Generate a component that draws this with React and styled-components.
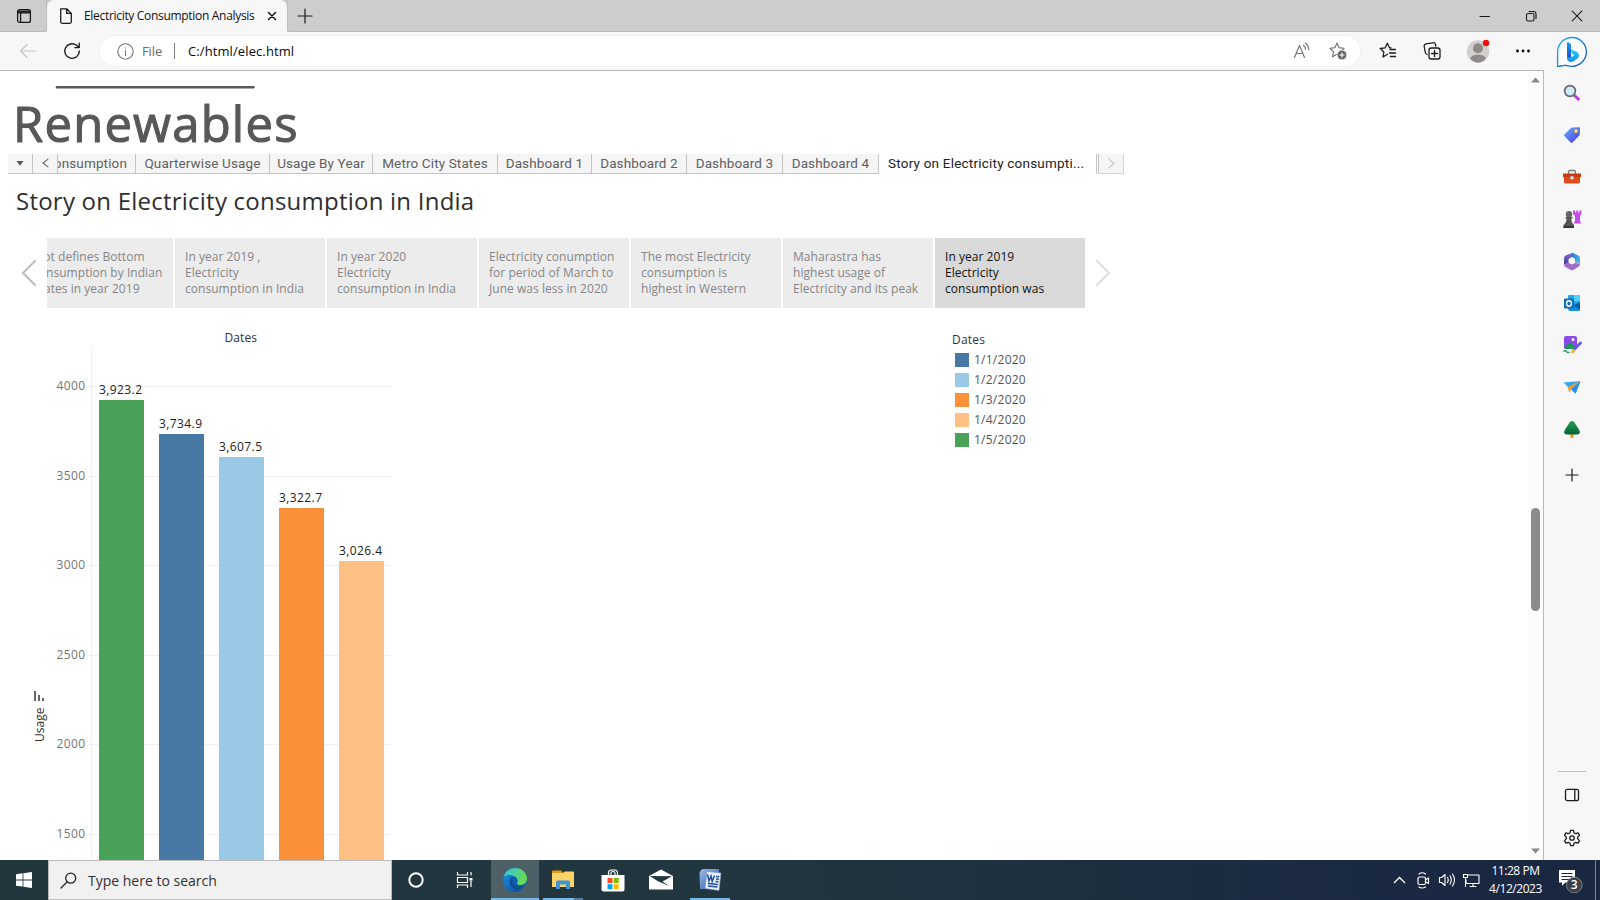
import React from "react";
import styled, { createGlobalStyle } from "styled-components";

const GlobalStyle = createGlobalStyle`
  * { box-sizing: border-box; }
  html, body { margin: 0; padding: 0; }
  body { width: 1600px; height: 900px; overflow: hidden; background: #fff; font-family: "Open Sans", "Noto Sans", sans-serif; }
  svg { display: block; flex: none; }
`;

/* ---------- window frame ---------- */

const Desktop = styled.div`
  width: 1600px;
  height: 900px;
  display: flex;
  flex-direction: column;
  overflow: hidden;
`;

const TitleBar = styled.div`
  height: 32px;
  display: flex;
  background: #cdcdcd;
  flex: none;
`;

const Slot = styled.div`
  width: ${(p) => p.$w}px;
  display: flex;
  align-items: center;
  justify-content: center;
  flex: none;
`;

const WorkspaceSlot = styled(Slot)`
  padding-left: 2px;
  border-bottom: 1px solid #b9b9b9;
  border-right: 1px solid #bdbdbd;
  border-bottom-right-radius: 4px;
`;

const BrowserTab = styled.div`
  width: 240px;
  display: flex;
  align-items: center;
  background: #f7f7f7;
  border-radius: 7px 7px 0 0;
  padding-left: 11px;
`;

const TabTitle = styled.span`
  font-size: 12px;
  letter-spacing: -0.31px;
  color: #111;
  white-space: nowrap;
  width: 171px;
  margin: 0 12px 1px 10px;
`;

const TitleRest = styled.div`
  flex: 1;
  display: flex;
  justify-content: space-between;
  border-bottom: 1px solid #b9b9b9;
  border-left: 1px solid #bdbdbd;
  border-bottom-left-radius: 4px;
`;

const WindowControls = styled.div`
  display: flex;
`;

const Browser = styled.div`
  height: 828px;
  display: flex;
  flex: none;
  background: #f7f7f7;
`;

const MainColumn = styled.div`
  width: 1544px;
  display: flex;
  flex-direction: column;
`;

const Toolbar = styled.div`
  height: 38px;
  display: flex;
  align-items: center;
  flex: none;
`;

const AddressBar = styled.div`
  width: 1260px;
  height: 30px;
  margin: 0 6px 0 12px;
  flex: none;
  border-radius: 15px;
  background: #fff;
  display: flex;
  align-items: center;
  padding-left: 17px;
  font-size: 13px;
  box-shadow: 0 0 3px rgba(0, 0, 0, 0.06);
`;

const Scheme = styled.span`
  color: #6b6b6b;
  margin: 0 11px 0 8px;
  letter-spacing: -0.1px;
  width: 21px;
`;

const SchemeDivider = styled.span`
  width: 1px;
  height: 16px;
  background: #7d7d7d;
`;

const Url = styled.span`
  color: #0a0a0a;
  margin-left: 13px;
  flex: 1;
  letter-spacing: 0.1px;
`;

const Viewport = styled.div`
  height: 790px;
  border-top: 1px solid #b8b8b8;
  border-right: 1px solid #b8b8b8;
  background: #fff;
  display: flex;
  overflow: hidden;
`;

const Page = styled.div`
  flex: 1;
  height: 789px;
  overflow: hidden;
  display: flex;
  flex-direction: column;
`;

const ScrollTrack = styled.div`
  width: 15px;
  background: #fcfcfc;
  display: flex;
  flex-direction: column;
  align-items: center;
  padding: 6px 0 6px;
`;

const ScrollThumb = styled.div`
  width: 9px;
  height: 103px;
  border-radius: 5px;
  background: #8b8b8b;
  margin: 425px 0 auto;
`;

/* ---------- sheet tabs ---------- */

const SheetStrip = styled.div`
  height: 20px;
  display: flex;
  margin-left: 8px;
  flex: none;
  font-family: Roboto, "Open Sans", sans-serif;
`;

const SheetCell = styled.div`
  width: ${(p) => p.$w}px;
  height: 20px;
  display: flex;
  align-items: center;
  justify-content: ${(p) => (p.$end ? "flex-end" : "center")};
  padding-right: ${(p) => (p.$end ? 8 : 0)}px;
  padding-bottom: 1px;
  overflow: hidden;
  white-space: nowrap;
  font-size: 13.5px;
  letter-spacing: 0.13px;
  color: #5f5f5f;
  background: #f5f5f5;
  border-right: 1px solid #c4c4c4;
  border-bottom: 1px solid #c4c4c4;
`;

const ActiveSheet = styled(SheetCell)`
  justify-content: flex-start;
  padding-left: 9px;
  letter-spacing: 0.21px;
  color: #222;
  background: #fff;
  border-bottom-color: #fff;
`;

const SheetNext = styled(SheetCell)`
  margin-left: 1px;
  border-color: #d4d4d4;
  border-left: 1px solid #c4c4c4;
`;

const StoryTitle = styled.h1`
  margin: 0;
  height: 64px;
  padding: 9px 0 0 16px;
  font-size: 24px;
  line-height: 36px;
  font-weight: 400;
  letter-spacing: 0.23px;
  color: #2f2f2f;
  flex: none;
`;

/* ---------- story points ---------- */

const StoryRow = styled.div`
  height: 70px;
  display: flex;
  align-items: center;
  padding-left: 11px;
  flex: none;
`;

const Cards = styled.div`
  width: 1038px;
  display: flex;
  justify-content: flex-end;
  gap: 2px;
  overflow: hidden;
`;

const Card = styled.div`
  width: 150px;
  height: 70px;
  flex: none;
  padding: 11px 0 0 10px;
  font-size: 12px;
  line-height: 16px;
  letter-spacing: 0.04px;
  white-space: pre;
  background: ${(p) => (p.$active ? "#d9d9d9" : "#ececec")};
  color: ${(p) => (p.$active ? "#111" : "#868686")};
`;

const VizRow = styled.div`
  flex: 1;
  display: flex;
  align-items: flex-start;
`;

const Legend = styled.div`
  margin: 22px 0 0 552px;
  display: flex;
  flex-direction: column;
  font-size: 12px;
  color: #333;
`;

const LegendTitle = styled.div`
  height: 19px;
  line-height: 20px;
  letter-spacing: 0.2px;
`;

const LegendItem = styled.div`
  height: 20px;
  display: flex;
  align-items: center;
  gap: 5px;
  padding-left: 3px;
  letter-spacing: 0.25px;
  color: #555;
`;

const Swatch = styled.span`
  width: 14px;
  height: 14px;
  margin-top: 1px;
  background: ${(p) => p.$c};
`;

/* ---------- side bar ---------- */

const SideBar = styled.div`
  width: 56px;
  display: flex;
  flex-direction: column;
  align-items: center;
`;

const SideSlot = styled.div`
  height: ${(p) => p.$h || 42}px;
  display: flex;
  align-items: center;
  justify-content: center;
  flex: none;
`;

const SideDivider = styled.div`
  width: 28px;
  height: 1px;
  background: #bdbdbd;
  margin-top: auto;
  margin-bottom: 2px;
`;

/* ---------- task bar ---------- */

const TaskBar = styled.div`
  height: 40px;
  display: flex;
  background: linear-gradient(90deg, #22363d 0%, #21363f 48%, #1d2e3f 70%, #1a2843 88%, #1a2740 100%);
  flex: none;
`;

const SearchBox = styled.div`
  width: 344px;
  height: 40px;
  background: #f1f1f1;
  border: 1px solid #bcbcbc;
  display: flex;
  align-items: center;
  padding: 1px 0 0 11px;
  gap: 11px;
  font-size: 14px;
  color: #303030;
`;

const TaskButton = styled.div`
  width: 48px;
  height: 40px;
  margin-right: ${(p) => p.$gap || 0}px;
  display: flex;
  flex-direction: column;
  align-items: center;
  justify-content: space-between;
  padding-top: ${(p) => p.$top || 8}px;
  background: ${(p) => (p.$active ? "#4d6066" : "transparent")};
`;

const Running = styled.div`
  width: ${(p) => p.$w}px;
  height: 2px;
  background: ${(p) => (p.$split ? "linear-gradient(90deg, #76b9ed 31px, #4f7ea3 31px)" : "#76b9ed")};
`;

const Tray = styled.div`
  margin-left: auto;
  display: flex;
  align-items: center;
`;

const Clock = styled.div`
  width: 63px;
  padding-left: 2px;
  color: #fff;
  font-size: 12px;
  line-height: 18px;
  text-align: center;
  letter-spacing: -0.45px;
`;

const Peek = styled.div`
  width: 5px;
  height: 40px;
  border-left: 1px solid #7c8698;
`;

/* ---------- icons ---------- */

const Line = ({ s = 16, w = 1, c = "#1b1b1b", children, ...rest }) => (
  <svg width={s} height={s} viewBox={`0 0 ${s} ${s}`} fill="none" stroke={c} strokeWidth={w} strokeLinecap="round" strokeLinejoin="round" {...rest}>
    {children}
  </svg>
);

const WorkspacesIcon = () => (
  <Line w="1.3"><rect x="1.6" y="1.6" width="12.8" height="12.8" rx="2" /><path d="M2 3.2h12v1.6H2z" fill="#1b1b1b" stroke="#1b1b1b" /><path d="M4.6 5v9" /></Line>
);
const FileIcon = () => (
  <Line w="1.3"><path d="M2.7.8h6L13.3 5.400v8.400a1.500 1.500 0 0 1-1.500 1.500H4.200a1.500 1.500 0 0 1-1.500-1.500zM8.700.8v4.600h4.600" /></Line>
);
const CloseTabIcon = () => <Line s={10} w="1.5"><path d="M1.5 1.500l7 7M8.500 1.500l-7 7" /></Line>;
const PlusIcon = ({ s = 16 }) => <Line s={s} w="1.2"><path d={`M${s / 2} 1v${s - 2}M1 ${s / 2}h${s - 2}`} /></Line>;
const MinIcon = () => <Line s={12}><path d="M1 6.500h9.500" /></Line>;
const RestoreIcon = () => <Line s={12} w="1.1"><rect x="1.500" y="3.500" width="7.500" height="7.500" rx="1.500" /><path d="M4 1.500h4.500A2.600 2.600 0 0 1 11 4v4.500" /></Line>;
const CloseIcon = () => <Line s={12} w="1.1"><path d="M1.200 1.200l9.600 9.600M10.800 1.200L1.200 10.800" /></Line>;
const BackIcon = () => <Line s={18} c="#c6c6c6" w="1.2"><path d="M17 9H1.500M8 2.500L1.500 9 8 15.500" /></Line>;
const RefreshIcon = () => <Line s={18} w="1.400"><path d="M16.300 9A7.300 7.300 0 1 1 13.500 3.300L16 5.500M16.200 1.200V5.600H11.800" /></Line>;
const InfoIcon = () => <Line s={17} c="#777" w="1.1"><circle cx="8.500" cy="8.500" r="7.700" /><path d="M8.500 7.500v5M8.500 4.800v.3" /></Line>;
const ReadAloudIcon = () => (
  <Line s={18} c="#777" w="1.2"><path d="M1.500 15.500L6.500 3.500l5 12M3 11.500h7M10.500 3.200q2 1.500 2 4M12.500 1.200q3.200 2.300 3.200 6.500" /></Line>
);
const star = "M8 1l2.100 4.700 5 .6-3.700 3.500 1 5L8 12.300l-4.500 2.500 1-5L.900 6.300l5-.6z";
const AddStarIcon = () => (
  <Line s={18} c="#777" w="1.2"><path d={star} /><circle cx="13" cy="13" r="4.800" fill="#666" stroke="#fff" strokeWidth=".6" /><path d="M13 11v4M11 13h4" stroke="#fff" /></Line>
);
const FavoritesIcon = () => (
  <Line s={18} w="1.3"><path d="M8.500 12.200L4 15l.9-5L1.200 6.500l5-.7L8.300 1.300l2.200 4.500h1.500M11 7.500h5.500M10.500 11h6M11.500 14.500h5" /></Line>
);
const CollectionsIcon = () => (
  <Line s={18} w="1.3"><rect x="6" y="6" width="11" height="11" rx="2.200" /><path d="M11.500 8.500v6M8.500 11.500h6M4 12.500A3 3 0 0 1 2.200 10L1.200 4.500A2.300 2.300 0 0 1 3 1.900l6.500-1.100A2.500 2.500 0 0 1 12.500 2.500L12.800 4" /></Line>
);
const ProfileIcon = () => (
  <svg width="26" height="26" viewBox="0 0 26 26">
    <circle cx="13" cy="13.500" r="11.200" fill="#d2d0ce" />
    <circle cx="13" cy="10.300" r="5" fill="#8d8a87" />
    <path d="M5.300 20.600C6.200 17.500 9 16.800 13 16.800s6.800.7 7.700 3.800A11 11 0 0 1 13 24.700a11 11 0 0 1-7.700-4.100z" fill="#8d8a87" />
    <circle cx="21" cy="5" r="3.200" fill="#f00f0f" />
  </svg>
);
const DotsIcon = () => <svg width="16" height="4"><circle cx="2.500" cy="2" r="1.400" /><circle cx="8" cy="2" r="1.400" /><circle cx="13.500" cy="2" r="1.400" /></svg>;
const Arrow = ({ down }) => <svg width="9" height="6" viewBox="0 0 9 6"><path d={down ? "M0 .5h9L4.500 5.500z" : "M0 5.500h9L4.500.5z"} fill="#8a8a8a" /></svg>;
const Chevron = ({ w, h, c, sw, right }) => (
  <svg width={w} height={h} viewBox={`0 0 ${w} ${h}`} fill="none" stroke={c} strokeWidth={sw} strokeLinecap="round">
    <path d={right ? `M${sw} ${sw}L${w - sw} ${h / 2}L${sw} ${h - sw}` : `M${w - sw} ${sw}L${sw} ${h / 2}L${w - sw} ${h - sw}`} />
  </svg>
);

const Gradient = ({ id, from, to, x2 = 1, y2 = 1 }) => (
  <linearGradient id={id} x1="0" y1="0" x2={x2} y2={y2}><stop stopColor={from} /><stop offset="1" stopColor={to} /></linearGradient>
);
const BingIcon = () => (
  <svg width="32" height="32" viewBox="0 0 32 32">
    <defs><Gradient id="bingRing" from="#12b9f0" to="#1c4fc4" /><Gradient id="bingB" from="#1c9cf4" to="#1747d0" x2={0} /><Gradient id="bingC" from="#1fd0f0" to="#1f8ff0" x2={0} /></defs>
    <path d="M1.600 30.300V16A14.400 14.400 0 1 1 16 30.300c-4 0-5.500-1.300-7.500-1-2.500.3-4 1-6.900 1z" fill="#fff" stroke="url(#bingRing)" strokeWidth="1.300" />
    <path d="M11 7q0-1.500 1.300-.8l2 1.200q.8.600.8 1.600v12.500L11 23.500z" fill="url(#bingB)" />
    <path d="M11 19.500c.5 2.500 3 2.500 4.500 1.600l3-1.900-1.500-.8q-.8-.4-1.100-1.300l-.9-2.600q-.3-1.300 1-.8l5 2.300c2.500 1.500 2.500 4.600.8 6.200l-4.600 3.200C14.500 27 11 25.500 11 22.500z" fill="url(#bingC)" />
  </svg>
);
const SearchColorIcon = () => (
  <svg width="18" height="18" viewBox="0 0 18 18"><path d="M11 11l5.200 5" stroke="#c92cf0" strokeWidth="3" /><path d="M10.500 10.500l2.200 2.200" stroke="#777" strokeWidth="2" /><circle cx="7" cy="7" r="5.400" fill="#cdeafa" stroke="#666" strokeWidth="1.600" /></svg>
);
const TagIcon = () => (
  <svg width="18" height="18" viewBox="0 0 18 18"><defs><Gradient id="tag" from="#64b2fa" to="#4b35e8" /></defs><path d="M9.500 1.500L16 1.200q1 0 1 1l-.3 6.200q0 .8-.6 1.400L9.600 16.500q-1 .9-2 0L1.500 10.300q-.9-1 0-2l6.500-6.200q.7-.6 1.500-.6z" fill="url(#tag)" /><circle cx="13" cy="5" r="1.800" fill="#fbe9a0" stroke="#e0a21a" strokeWidth=".8" /></svg>
);
const ToolboxIcon = () => (
  <svg width="18" height="16" viewBox="0 0 18 16"><path d="M5.500 5V3q0-1.500 1.500-1.500h4q1.500 0 1.500 1.500v2" fill="none" stroke="#777" strokeWidth="1.300" /><path d="M1 7h16v6q0 1.500-1.500 1.500h-13Q1 14.500 1 13z" fill="#e04c1c" /><path d="M0 4.500h18v3.700H0z" fill="#c93a10" /><circle cx="9" cy="8.800" r="1.900" fill="#ddd" stroke="#999" strokeWidth=".5" /></svg>
);
const GamesIcon = () => (
  <svg width="20" height="19" viewBox="0 0 20 19"><path d="M11 .5h2v2h1.200v-2h2v2h1.200v-2h2v3.500L18 6v5l1.300 2.500h-7.600L13 11V6l-2-2z" fill="#c24df0" /><circle cx="7" cy="4.200" r="3.200" fill="#666" /><path d="M3.500 7h7v1.500H9.300c0 3 1 5 2.700 6.500v3H1.500v-3C3.500 13.500 4.500 11.500 4.600 8.500H3.500z" fill="#555" /><path d="M1.500 16.200h10.500V18H1.500z" fill="#333" /></svg>
);
const OfficeIcon = () => (
  <svg width="18" height="19" viewBox="0 0 18 19"><defs><Gradient id="off1" from="#8e6bd8" to="#3d3a9c" x2={0} /><Gradient id="off2" from="#2a6fd0" to="#55c5ee" /></defs>
    <path d="M9.500.7L3 3.200Q1 4.200 1 6.500v6.300l4.500-2.300V7L12 3z" fill="url(#off1)" />
    <path d="M9.500.7l6 3Q17 4.500 17 6.500v6L12 9.500V7L7.500 4z" fill="url(#off2)" />
    <path d="M17 12.500q-.2 1.500-1.500 2.200L10.700 17.800q-1.700 1-3.400 0L2.300 15Q1 14.200 1 12.500l4.500-2.300L9 12.500l3.500-2.300z" fill="#a06cc8" /><circle cx="9" cy="9.200" r="3" fill="#f7f7f7" />
  </svg>
);
const OutlookIcon = () => (
  <svg width="18" height="18" viewBox="0 0 18 18"><rect x="5" y="1" width="12" height="15" rx="1" fill="#28a8ea" /><path d="M11 1h6v6h-6z" fill="#50d2fa" /><path d="M5 10l12-1v6.500q0 1.500-1.500 1.500H6z" fill="#1490df" /><path d="M11 11.500L17 8v8z" fill="#0a5ca8" /><rect x="1" y="4.500" width="10" height="10" rx="1" fill="#0f6cbd" /><ellipse cx="6" cy="9.500" rx="2.400" ry="2.700" fill="none" stroke="#fff" strokeWidth="1.400" /></svg>
);
const DesignerIcon = () => (
  <svg width="20" height="20" viewBox="0 0 20 20"><rect x="2" y="1" width="13" height="13" rx="2" fill="#8d49e8" /><circle cx="11" cy="4.500" r="1.500" fill="#fff" /><path d="M2 12.500l5-4.500q1-.7 2 0l5 4.500-2 1.500H3z" fill="#159a5b" /><path d="M1.500 16.500q2-1.800 3 0t3 .5" fill="none" stroke="#159a5b" strokeWidth="1.400" /><path d="M18.500 8L12 14.500" stroke="#6258e8" strokeWidth="2.800" strokeLinecap="round" /><path d="M11 13.500l2 2c0 2.500-2 3-4.500 2.700 1.200-.8.500-3.800 2.500-4.700z" fill="#f5b53c" /></svg>
);
const PlaneIcon = () => (
  <svg width="18" height="16" viewBox="0 0 18 16"><path d="M.5 3.500L17.500 2 5.500 8.500z" fill="#30a8ee" /><path d="M17.500 2l-5 12.500-4-4z" fill="#1a70d8" /><path d="M17.500 2L4.500 8l1.800 5.500 2-3.500z" fill="#f09a30" /><path d="M17.500 2L8 10l4.500 4.500z" fill="#2b8fe8" /></svg>
);
const TreeIcon = () => (
  <svg width="18" height="19" viewBox="0 0 18 19"><defs><Gradient id="tree" from="#22a052" to="#046233" x2={0} /></defs><path d="M7.300 13h3.400v4.500q-1.700.8-3.400 0z" fill="#f09a2c" /><path d="M9 1q1.300 0 2.300 1.200l4.900 7.800q1.900 4.500-2.300 4.500H4.100q-4.200 0-2.300-4.500l4.900-7.800Q7.700 1 9 1z" fill="url(#tree)" /></svg>
);
const PanelIcon = () => <Line s={16} w="1.300"><rect x="1.500" y="2.300" width="13" height="11.400" rx="2" /><path d="M10.800 2.500v11" /></Line>;
const GearIcon = () => (
  <Line s={18} w="1.300"><circle cx="9" cy="9" r="2.200" /><path d="M7.600 1.300h2.800l.6 2.400 1.700 1 2.400-.8 1.400 2.500-1.800 1.700v1.800l1.800 1.700-1.400 2.500-2.400-.8-1.700 1-.6 2.400H7.600L7 14.300l-1.700-1-2.400.8-1.400-2.500 1.800-1.700V8.100L1.500 6.400l1.400-2.500 2.400.8 1.700-1z" /></Line>
);

const WindowsIcon = () => <svg width="16" height="16"><path d="M0 2.300L6.600 1.300V7.500H0zM7.400 1.200L16 0v7.500H7.400zM0 8.400h6.600v6.200L0 13.700zM7.400 8.400H16V16l-8.600-1.200z" fill="#fff" /></svg>;
const MagnifierIcon = () => <Line s={17} c="#222" w="1.300"><circle cx="10.700" cy="6.200" r="5" /><path d="M7 10L1 16" /></Line>;
const CortanaIcon = () => <svg width="16" height="24"><circle cx="8" cy="12" r="6.700" fill="none" stroke="#fff" strokeWidth="1.900" /></svg>;
const TaskViewIcon = () => <svg width="17" height="24" viewBox="0 0 17 24" fill="none" stroke="#fff" strokeWidth="1.200"><path d="M1.500 4v3h10V4M1.500 20v-3h10v3M1.500 9.500h10v5h-10zM15 4v3.500M15 12.500V19" /><path d="M13.500 10h3v2.500h-3z" fill="#fff" stroke="none" /></svg>;
const EdgeIcon = () => (
  <svg width="24" height="24" viewBox="0 0 24 24"><defs><Gradient id="edgeA" from="#2fc0ee" to="#67db55" y2={0.3} /><Gradient id="edgeB" from="#1a8ae0" to="#0d4f9e" /></defs>
    <circle cx="12" cy="12" r="12" fill="#0f5bab" />
    <path d="M.3 10C1.500 3.500 6.500 0 12 0c7 0 12 5 12 10.500 0 4.500-3.500 6.500-7 6.500-2.500 0-3.500-1-3-2 1.500-2 .8-5-2.500-6.500C7.500 6.500 2 7 .3 10z" fill="url(#edgeA)" />
    <path d="M.3 10.500C2 6.800 7 6.800 10 8.300c-4 1.700-4.500 6-2.500 9.200 2 3.300 5.500 5 9 4.600C9 26.500-1.500 21 .3 10.500z" fill="url(#edgeB)" />
    <path d="M10 8.600c-3 3-1.500 8 2.500 9.600 3.500 1.300 6.500.5 10-1.500-2.500 5.500-9.500 6.500-13.500 2C6 15.500 6.500 10.500 10 8.600z" fill="#134a8d" />
    <path d="M22.500 16.500c1.500 0-2 4.500-6 5.500 2-1 4-3 6-5.500z" fill="#4d6066" />
  </svg>
);
const FolderIcon = () => (
  <svg width="22" height="20" viewBox="0 0 22 20"><path d="M0 1.500Q0 .5 1 .5h8l2 2.500H0z" fill="#e09b10" /><path d="M0 3h11l1.500-1.500H21q1 0 1 1V17H0z" fill="#fbd467" /><path d="M4 19v-7q0-1.500 1.500-1.500h11Q18 10.500 18 12v7h-4v-4.500H8V19z" fill="#3f93d6" /></svg>
);
const StoreIcon = () => (
  <svg width="24" height="24" viewBox="0 0 24 24"><path d="M7.500 6V4Q7.500 1 10.500 1h3q3 0 3 3v2M10 6V4q0-1.500 2-1.500T14 4v2" fill="none" stroke="#fff" strokeWidth="1.200" /><path d="M.5 6h23v14.500q0 2-2 2h-19q-2 0-2-2z" fill="#fff" /><path d="M6.500 9h5v5h-5z" fill="#f25022" /><path d="M12.700 9h5v5h-5z" fill="#7fba00" /><path d="M6.500 15.200h5v5h-5z" fill="#00a4ef" /><path d="M12.700 15.200h5v5h-5z" fill="#ffb900" /></svg>
);
const MailIcon = () => <svg width="24" height="22" viewBox="0 0 24 22"><path d="M0 8L12 1.500 24 8v13.500H0z" fill="#fff" /><path d="M1 8l22 .3-9.500 5.200L20 18 8.500 13z" fill="#22363f" /></svg>;
const WordIcon = () => (
  <svg width="23" height="24" viewBox="0 0 23 24"><defs><Gradient id="word" from="#9dbce8" to="#2c59a8" /></defs><path d="M4 1h16l-1 20H1L.500 5Q2 1 4 1z" fill="url(#word)" /><path d="M8 3.500L22 5l-2 17.500L6 20.500z" fill="#e9eff9" stroke="#7c98c8" strokeWidth=".6" />
    <path d="M8.500 6.500l1.500 6.500 2-5 1.200 5.500 2.300-6M17 8.500l3.200.3M17 11l3 .3M16.500 13.500l3 .3M9 15.500l10 1M9 18l9.500 1" fill="none" stroke="#2450a0" strokeWidth="1.500" /></svg>
);
const MeetIcon = () => <Line s={18} c="#fff" w="1.200"><rect x="4" y="6" width="7.500" height="7.500" rx="1.500" /><path d="M11.500 8.700l3-1.700v5.500l-3-1.700M5 3q3.200-2.500 6.500 0M5 16q3.200 2 6.500 0" /></Line>;
const SpeakerIcon = () => <Line s={18} c="#fff" w="1.100"><path d="M1.500 6.500h2.200L7 3.500v11l-3.300-3H1.500zM9.500 6.500q1.500 2.500 0 5M12 4.800q2.700 4.200 0 8.400M14.500 3q4 6 0 12" /></Line>;
const NetworkIcon = () => <Line s={18} c="#fff" w="1.100"><path d="M6 4h11v8.500H4V8.500M8 15.500h6M11 12.500v3M1.500 3.500h4v3h-4zM3.500 6.500v9" /></Line>;
const NotificationIcon = () => (
  <svg width="25" height="25" viewBox="0 0 25 25"><path d="M1 2h16v12.500H7.500L4 17.700v-3.200H1z" fill="#fff" /><path d="M3.500 5.500h11M3.500 8.500h11M3.500 11.500h8" stroke="#1b2840" strokeWidth="1.200" /><circle cx="16.300" cy="17" r="7.800" fill="#3c3f45" stroke="#83878e" strokeWidth=".9" /><text x="16.300" y="21.300" textAnchor="middle" fontSize="12" fontWeight="600" fill="#fff">3</text></svg>
);

/* ---------- data ---------- */

const bars = [
  { label: "3,923.2", x: 99, top: 92, c: "#49a257" },
  { label: "3,734.9", x: 159, top: 126, c: "#4878a4" },
  { label: "3,607.5", x: 219, top: 149, c: "#9ac9e7" },
  { label: "3,322.7", x: 279, top: 200, c: "#fb903a" },
  { label: "3,026.4", x: 339, top: 253, c: "#fec085" },
];
const ticks = [
  [4000, 78.5], [3500, 168.5], [3000, 257.5], [2500, 347.5], [2000, 436.5], [1500, 526.5],
];
const legend = [
  ["1/1/2020", "#4878a4"], ["1/2/2020", "#9ac9e7"], ["1/3/2020", "#fb903a"], ["1/4/2020", "#fec085"], ["1/5/2020", "#49a257"],
];
const stories = [
  "Plot defines Bottom\nconsumption by Indian\nStates in year 2019",
  "In year 2019 ,\nElectricity\nconsumption in India",
  "In year 2020\nElectricity\nconsumption in India",
  "Electricity conumption\nfor period of March to\nJune was less in 2020",
  "The most Electricity\nconsumption is\nhighest in Western",
  "Maharastra has\nhighest usage of\nElectricity and its peak",
  "In year 2019\nElectricity\nconsumption was",
];
const sheets = [
  ["Quarterwise Usage", 134], ["Usage By Year", 103], ["Metro City States", 125], ["Dashboard 1", 94],
  ["Dashboard 2", 95], ["Dashboard 3", 96], ["Dashboard 4", 96],
];

const Chart = () => (
  <svg width="400" height="552" viewBox="0 0 400 552" fontSize="12" fontFamily="Open Sans">
    <text x="224.500" y="34" textLength="32.500" fill="#333">Dates</text>
    {ticks.map(([t, y]) => (
      <g key={t}>
        <path d={`M88 ${y}H391`} stroke="#f0f0f0" />
        <text x="56.500" y={y + 3.500} textLength="28.500" fill="#757575">{t}</text>
      </g>
    ))}
    <path d="M91.500 39V552" stroke="#f0f0f0" />
    {bars.map((b) => (
      <g key={b.label}>
        <rect x={b.x} y={b.top} width="45" height={552 - b.top} fill={b.c} />
        <text x={b.x} y={b.top - 6} textLength="43" fill="#222">{b.label}</text>
      </g>
    ))}
    <path d="M34 383h2v10h-2zM38 387h2v6h-2zM42 390h2v3h-2z" fill="#666" />
    <text transform="translate(44 434) rotate(-90)" textLength="34.500" fill="#333">Usage</text>
  </svg>
);

const LogoArt = () => (
  <svg width="320" height="83" viewBox="0 0 320 83">
    <path d="M57 16.300H253.500" stroke="#5a5a5a" strokeWidth="2.400" strokeLinecap="round" />
    <text x="13" y="70.500" fontFamily="Open Sans" fontSize="49" fontWeight="400" textLength="284.500" fill="#58585a" stroke="#58585a" strokeWidth="1.100" strokeLinejoin="round">Renewables</text>
  </svg>
);

export default function App() {
  return (
    <Desktop>
      <GlobalStyle />
      <TitleBar>
        <WorkspaceSlot $w={47}><WorkspacesIcon /></WorkspaceSlot>
        <BrowserTab>
          <FileIcon />
          <TabTitle>Electricity Consumption Analysis</TabTitle>
          <CloseTabIcon />
        </BrowserTab>
        <TitleRest>
          <Slot $w={33}><PlusIcon /></Slot>
          <WindowControls>
            <Slot $w={46}><MinIcon /></Slot>
            <Slot $w={46}><RestoreIcon /></Slot>
            <Slot $w={46}><CloseIcon /></Slot>
          </WindowControls>
        </TitleRest>
      </TitleBar>

      <Browser>
        <MainColumn>
          <Toolbar>
            <Slot $w={56}><BackIcon /></Slot>
            <Slot $w={32}><RefreshIcon /></Slot>
            <AddressBar>
              <InfoIcon />
              <Scheme>File</Scheme>
              <SchemeDivider />
              <Url>C:/html/elec.html</Url>
              <Slot $w={28}><ReadAloudIcon /></Slot>
              <Slot $w={44}><AddStarIcon /></Slot>
            </AddressBar>
            <Slot $w={44}><FavoritesIcon /></Slot>
            <Slot $w={44}><CollectionsIcon /></Slot>
            <Slot $w={48}><ProfileIcon /></Slot>
            <Slot $w={42}><DotsIcon /></Slot>
          </Toolbar>
          <Viewport>
            <Page>
              <LogoArt />
              <SheetStrip>
                <SheetCell $w={25}><svg width="8" height="5"><path d="M.500 0h7L4 4.800z" fill="#555" /></svg></SheetCell>
                <SheetCell $w={25}><Chevron w={7} h={10} c="#666" sw={1.1} /></SheetCell>
                <SheetCell $w={78} $end>Consumption</SheetCell>
                {sheets.map(([name, w]) => <SheetCell key={name} $w={w}>{name}</SheetCell>)}
                <ActiveSheet $w={218}>Story on Electricity consumpti...</ActiveSheet>
                <SheetNext $w={26}><Chevron w={7} h={11} c="#c4c4c4" sw={1.1} right /></SheetNext>
              </SheetStrip>
              <StoryTitle>Story on Electricity consumption in India</StoryTitle>
              <StoryRow>
                <Slot $w={36}><Chevron w={16} h={28} c="#bcbcbc" sw={2} /></Slot>
                <Cards>
                  {stories.map((s, i) => <Card key={i} $active={i === stories.length - 1}>{s}</Card>)}
                </Cards>
                <Slot $w={36}><Chevron w={16} h={28} c="#dedede" sw={2} right /></Slot>
              </StoryRow>
              <VizRow>
                <Chart />
                <Legend>
                  <LegendTitle>Dates</LegendTitle>
                  {legend.map(([d, c]) => <LegendItem key={d}><Swatch $c={c} />{d}</LegendItem>)}
                </Legend>
              </VizRow>
            </Page>
            <ScrollTrack>
              <Arrow />
              <ScrollThumb />
              <Arrow down />
            </ScrollTrack>
          </Viewport>
        </MainColumn>
        <SideBar>
          <SideSlot $h={40}><BingIcon /></SideSlot>
          <SideSlot><SearchColorIcon /></SideSlot>
          <SideSlot><TagIcon /></SideSlot>
          <SideSlot><ToolboxIcon /></SideSlot>
          <SideSlot><GamesIcon /></SideSlot>
          <SideSlot><OfficeIcon /></SideSlot>
          <SideSlot><OutlookIcon /></SideSlot>
          <SideSlot><DesignerIcon /></SideSlot>
          <SideSlot><PlaneIcon /></SideSlot>
          <SideSlot><TreeIcon /></SideSlot>
          <SideSlot $h={50}><PlusIcon s={14} /></SideSlot>
          <SideDivider />
          <SideSlot><PanelIcon /></SideSlot>
          <SideSlot $h={44}><GearIcon /></SideSlot>
        </SideBar>
      </Browser>

      <TaskBar>
        <Slot $w={48}><WindowsIcon /></Slot>
        <SearchBox><MagnifierIcon />Type here to search</SearchBox>
        <TaskButton><CortanaIcon /></TaskButton>
        <TaskButton $gap={3}><TaskViewIcon /></TaskButton>
        <TaskButton $active><EdgeIcon /><Running $w={48} /></TaskButton>
        <TaskButton $gap={2} $top={10}><FolderIcon /><Running $w={40} $split /></TaskButton>
        <TaskButton $top={9}><StoreIcon /></TaskButton>
        <TaskButton $gap={1} $top={8}><MailIcon /></TaskButton>
        <TaskButton $top={8}><WordIcon /><Running $w={40} /></TaskButton>
        <Tray>
          <Slot $w={24}>
            <svg width="13" height="8" fill="none" stroke="#fff" strokeWidth="1.300"><path d="M1 7l5.500-5.500L12 7" /></svg>
          </Slot>
          <Slot $w={24}><MeetIcon /></Slot>
          <Slot $w={24}><SpeakerIcon /></Slot>
          <Slot $w={24}><NetworkIcon /></Slot>
          <Clock>11:28 PM<br />4/12/2023</Clock>
          <Slot $w={49}><NotificationIcon /></Slot>
          <Peek />
        </Tray>
      </TaskBar>
    </Desktop>
  );
}
